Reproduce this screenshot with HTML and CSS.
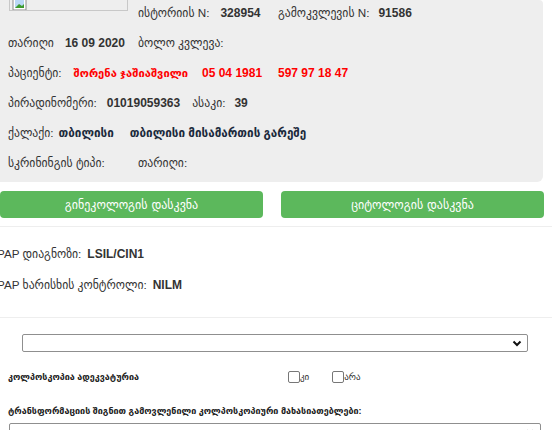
FILE: index.html
```html
<!DOCTYPE html>
<html lang="ka">
<head>
<meta charset="utf-8">
<link rel="stylesheet" href="styles.css">
</head>
<body>
<div class="panel">
  <div class="row r1">
    <div class="imgbox">
      <svg width="16" height="16" viewBox="0 0 16 16"><path d="M1 1h9l4 4v10H1z" fill="#fff" stroke="#8a8a8a"/><rect x="3" y="5" width="9" height="8" fill="#b9d7f5"/><path d="M3 13l4-4 3 2 2-2v4z" fill="#3c9a2e"/></svg>
    </div>
    <div class="cell c2"><span class="lbl">ისტორიის N:</span><b class="val v1">328954</b></div>
    <div class="cell"><span class="lbl">გამოკვლევის N:</span><b class="val">91586</b></div>
  </div>
  <div class="row">
    <div class="cell c1"><span class="lbl">თარიღი</span><b class="val v2">16 09 2020</b></div>
    <div class="cell"><span class="lbl">ბოლო კვლევა:</span></div>
  </div>
  <div class="row">
    <div class="cell c12"><span class="lbl">პაციენტი:</span><b class="val red name">შორენა ჯაშიაშვილი</b><b class="val red dob">05 04 1981</b></div>
    <div class="cell"><b class="red">597 97 18 47</b></div>
  </div>
  <div class="row">
    <div class="cell"><span class="lbl">პირადინომერი:</span><b class="val v3">01019059363</b><span class="lbl sp">ასაკი:</span><b class="val v4">39</b></div>
  </div>
  <div class="row">
    <div class="cell"><span class="lbl">ქალაქი:</span><b class="val city">თბილისი</b><b class="val city sp2">თბილისი მისამართის გარეშე</b></div>
  </div>
  <div class="row">
    <div class="cell c1"><span class="lbl">სკრინინგის ტიპი:</span></div>
    <div class="cell"><span class="lbl">თარიღი:</span></div>
  </div>
</div>

<div class="buttons">
  <button class="btn">გინეკოლოგის დასკვნა</button>
  <button class="btn">ციტოლოგის დასკვნა</button>
</div>
<hr class="sep">

<div class="pap">
  <div class="paprow"><span class="lbl">PAP დიაგნოზი:</span><b class="val">LSIL/CIN1</b></div>
  <div class="paprow"><span class="lbl">PAP ხარისხის კონტროლი:</span><b class="val pv2">NILM</b></div>
</div>
<hr class="sep">

<div class="form">
  <div class="select sel1">
    <svg width="10" height="7" viewBox="0 0 10 7"><path d="M1.5 1.5L5 5l3.5-3.5" fill="none" stroke="#111" stroke-width="2"/></svg>
  </div>
  <div class="qrow">
    <span class="qlabel">კოლპოსკოპია ადეკვატურია</span>
    <div class="checks">
      <label class="chk"><span class="box"></span>კი</label>
      <label class="chk"><span class="box"></span>არა</label>
    </div>
  </div>
  <div class="qlabel q2">ტრანსფორმაციის შიგნით გამოვლენილი კოლპოსკოპიური მახასიათებლები:</div>
  <div class="select sel2">
    <svg width="10" height="7" viewBox="0 0 10 7"><path d="M1.5 1.5L5 5l3.5-3.5" fill="none" stroke="#111" stroke-width="2"/></svg>
  </div>
</div>
</body>
</html>
```
FILE: styles.css
```css
html, body {
  margin: 0;
  padding: 0;
  background: #fff;
}
body {
  font-family: "Liberation Sans", "DejaVu Sans", sans-serif;
  font-size: 12px;
  line-height: 14px;
  color: #333;
  width: 552px;
  overflow: hidden;
}
.panel {
  width: 543px;
  height: 182px;
  box-sizing: border-box;
  background: #eee;
  border-radius: 0 4px 6px 0;
  padding-left: 8px;
}
.row {
  display: flex;
  height: 30px;
  padding-top: 6px;
  box-sizing: border-box;
  white-space: nowrap;
}
.r1 {
  padding-top: 0;
}
.r1 .cell {
  padding-top: 6px;
}
.imgbox {
  width: 119px;
  height: 11px;
  box-sizing: border-box;
  border: 1px solid #c8c8c8;
  border-top: none;
  margin-left: 1px;
  margin-right: 10px;
  display: flex;
  align-items: flex-end;
  overflow: hidden;
  padding-left: 2px;
}
.imgbox svg {
  flex: none;
  margin-bottom: -1px;
}
.cell {
  display: flex;
  align-items: baseline;
}
.c1 { width: 130px; }
.c2 { width: 140px; }
.c12 { width: 270px; }
.lbl {
  font-size: 11.7px;
}
.val {
  font-weight: bold;
  margin-left: 9px;
}
.v1 { margin-left: 11px; }
.v2 { margin-left: 11px; }
.v3 { margin-left: 10px; }
.v4 { margin-left: 9px; }
.red { color: #f00; }
.val.name { margin-left: 12px; font-size: 11.2px; }
.val.dob { margin-left: 14px; }
.city { color: #1b2a3c; font-size: 11.7px; margin-left: 5px; }
.sp { margin-left: 12px; }
.sp2 { margin-left: 16px; }

.buttons {
  display: grid;
  grid-template-columns: 263px 263px;
  column-gap: 18px;
  margin-top: 9px;
}
.btn {
  height: 27px;
  border: none;
  border-radius: 4px;
  background: #5cb85c;
  color: #fff;
  font-family: "DejaVu Sans", sans-serif;
  font-size: 12px;
  padding: 0;
}
.sep {
  margin: 8px 0 0;
  border: none;
  border-top: 1px solid #eee;
  height: 0;
}
.pap {
  margin-left: -3px;
  padding-top: 20px;
}
.paprow {
  display: flex;
  align-items: baseline;
  height: 31px;
}
.pap .val { margin-left: 6px; }
.pap .pv2 { margin-left: 6px; }
.form {
  padding-top: 16px;
}
.select {
  display: flex;
  justify-content: flex-end;
  align-items: center;
  height: 18px;
  box-sizing: border-box;
  border: 1px solid #8f8f8f;
  border-radius: 2px;
  padding-right: 5px;
  background: #fff;
}
.sel1 {
  margin-left: 22px;
  width: 506px;
}
.sel2 {
  margin-left: 9px;
  width: 532px;
}
.qrow {
  display: flex;
  align-items: center;
  margin-top: 18px;
  padding-left: 8px;
  height: 14px;
}
.qlabel {
  font-size: 9px;
  font-weight: bold;
  color: #222;
  white-space: nowrap;
}
.qrow .qlabel { width: 280px; }
.checks {
  display: flex;
  gap: 23px;
}
.chk {
  display: flex;
  align-items: center;
  font-size: 9px;
  color: #333;
}
.box {
  width: 12px;
  height: 12px;
  box-sizing: border-box;
  border: 1px solid #777;
  border-radius: 2px;
  background: #fff;
}
.q2 {
  margin-top: 20px;
  padding-left: 8px;
}
.sel2 { margin-top: 5px; }
```
